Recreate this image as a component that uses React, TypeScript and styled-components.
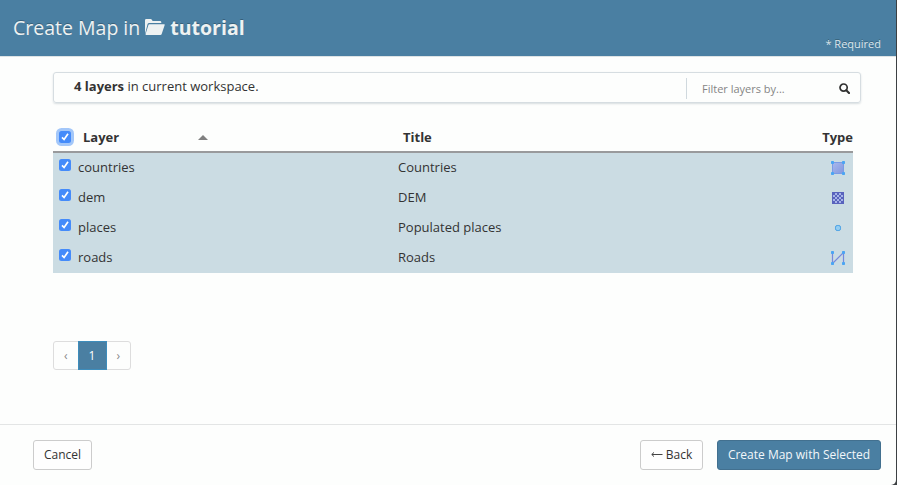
import React from 'react';
import styled, { createGlobalStyle, css } from 'styled-components';

const GlobalStyle = createGlobalStyle`
  * { box-sizing: border-box; }
  body {
    margin: 0;
    background: #3c4043;
    color: #333;
    font-family: 'Open Sans', 'Noto Sans', sans-serif;
    font-size: 13px;
    line-height: 20px;
    overflow: hidden;
  }
`;

const Dialog = styled.div`
  display: flex;
  flex-direction: column;
  width: 896px;
  height: 485px;
  background: #fdfefd;
  border-bottom-right-radius: 5px;
  overflow: hidden;
`;

const Header = styled.header`
  display: flex;
  justify-content: space-between;
  height: 57px;
  flex: none;
  padding: 0 15px 0 13px;
  background: #4a7fa2;
  border-bottom: 1px solid #dde3e5;
  color: #eef2f2;
  text-shadow: 0 -1px 0 rgba(0, 0, 0, 0.25);
`;

const Heading = styled.h1`
  display: flex;
  align-items: center;
  height: 56px;
  margin: 0;
  font-size: 19.5px;
  font-weight: 400;
  white-space: pre;

  strong { font-weight: 700; }
  svg { margin: 0 5px 2px 5px; }
`;

const Required = styled.span`
  align-self: flex-end;
  font-size: 11px;
  line-height: 15px;
  margin-bottom: 5px;
  color: #dce7ee;
`;

const Body = styled.main`
  flex: 1;
  padding: 15px 35px 0 53px;
`;

const FilterBar = styled.div`
  display: flex;
  height: 31px;
  border: 1px solid #d6dde1;
  border-radius: 3px;
  box-shadow: 0 1px 2px rgba(0, 40, 60, 0.15);
`;

const Count = styled.div`
  flex: 1;
  padding: 3px 0 0 20px;
`;

const Filter = styled.div`
  display: flex;
  align-items: center;
  justify-content: space-between;
  width: 174px;
  height: 21px;
  margin-top: 5px;
  padding: 0 10px 0 15px;
  border-left: 1px solid #d0d9de;
  color: #858585;
  font-size: 11px;
`;

const Table = styled.div`
  width: 800px;
  margin-top: 21px;
`;

const rowGrid = css`
  display: grid;
  grid-template-columns: 25px 320px 1fr 30px;
`;

const HeadRow = styled.div`
  ${rowGrid}
  grid-template-columns: 30px 115px 205px 1fr auto;
  height: 29px;
  padding-bottom: 2px;
  align-items: center;
  border-bottom: 2px solid #999a9c;
  font-weight: 700;
`;

const Row = styled.div`
  ${rowGrid}
  height: 30px;
  line-height: 28px;
  background: #cbdce3;
`;

const TypeCell = styled.span`
  display: flex;
  align-items: center;
  justify-content: center;
`;

const Check = styled.span<{ $focused?: boolean }>`
  display: flex;
  width: 12px;
  height: 12px;
  margin: ${p => (p.$focused ? '0 0 0 6px' : '6px 0 0 6px')};
  border-radius: 2.5px;
  background: #448bfa;
  box-shadow: ${p => (p.$focused ? '0 0 0 3px #a3c7f9' : 'none')};
`;

const SortArrow = styled.span`
  width: 0;
  height: 0;
  margin-top: 1px;
  border: 5px solid transparent;
  border-top: 0;
  border-bottom: 5px solid #808080;
`;

const Pager = styled.nav`
  display: flex;
  width: 78px;
  height: 29px;
  margin-top: 68px;
  border: 1px solid #ddd;
  border-radius: 3px;
`;

const PageItem = styled.span<{ $active?: boolean }>`
  display: flex;
  align-items: center;
  justify-content: center;
  flex: 1;
  color: #888;
  font-size: 12px;
  ${p => p.$active && css`
    flex: 0 0 29px;
    margin: -1px 0;
    border: 1px solid #3d8dbc;
    background: #4a7fa2;
    color: #fff;
  `}
`;

const Footer = styled.footer`
  display: flex;
  align-items: flex-start;
  flex: none;
  height: 61px;
  padding: 15px 15px 0 33px;
  border-top: 1px solid #e3e5e5;
`;

const Button = styled.button<{ $primary?: boolean; $width: number }>`
  display: flex;
  align-items: center;
  justify-content: center;
  gap: 3px;
  width: ${p => p.$width}px;
  height: 30px;
  padding: 0 0 1px;
  border: 1px solid ${p => (p.$primary ? '#42708f' : '#ccc')};
  border-radius: 3px;
  background: ${p => (p.$primary ? '#4a7fa2' : '#fefefe')};
  color: ${p => (p.$primary ? '#f2f7fa' : '#333')};
  font: 12px 'Open Sans', sans-serif;
  white-space: nowrap;
`;

const Actions = styled.div`
  display: flex;
  gap: 14px;
  margin-left: auto;
`;

const FolderIcon = () => (
  <svg width="20" height="17" viewBox="0 0 20 17" fill="#eef2f2">
    <path d="M0 15V1.2Q0 0 1.2 0H5.6Q6.5 0 7 1L7.6 2H15Q16.3 2 16.3 3.3V4H4.2Q3 4 2.6 5Z" />
    <path d="M4.3 5.3H19.2Q20 5.3 19.7 6.1L16.6 15.2Q16.3 16 15.4 16H1.2Q.3 16 .6 15.1L3.4 6Q3.6 5.3 4.3 5.3Z" />
  </svg>
);

const SearchIcon = () => (
  <svg width="11" height="11" viewBox="0 0 11 11" fill="none" stroke="#303030">
    <circle cx="4.6" cy="4.6" r="3.6" strokeWidth="1.7" />
    <path d="M7.3 7.3L10 10" strokeWidth="2.1" strokeLinecap="round" />
  </svg>
);

const BackArrow = () => (
  <svg width="12" height="7" viewBox="0 0 12 7" fill="none" stroke="#444">
    <path d="M.8 3.5H11.5M3 1.4L.8 3.5L3 5.6" />
  </svg>
);

const Checkbox = ({ focused }: { focused?: boolean }) => (
  <Check $focused={focused} role="checkbox" aria-checked="true">
    <svg width="12" height="12" viewBox="0 0 12 12" fill="none" stroke="#fff" strokeWidth="1.7">
      <path d="M3 6.3L5.1 8.5L9 2.8" />
    </svg>
  </Check>
);

type LayerType = 'polygon' | 'raster' | 'point' | 'line';

const Nodes = ({ points }: { points: number[][] }) => (
  <>
    {points.map(([x, y]) => (
      <rect key={`${x}-${y}`} x={x} y={y} width="3" height="3" rx=".7" fill="#4ba5f3" />
    ))}
  </>
);

const corners = [[1, 1], [12, 1], [1, 12], [12, 12]];

const checkerCells = Array.from({ length: 25 }, (_, i) => [i % 5, Math.floor(i / 5)])
  .filter(([x, y]) => (x + y) % 2 === 1);

const LayerIcon = ({ type }: { type: LayerType }) => (
  <svg width="16" height="16" viewBox="0 0 16 16">
    {type === 'polygon' && (
      <>
        <defs>
          <linearGradient id="area" x1="0" y1="0" x2="1" y2="1">
            <stop offset="0" stopColor="#a9b8ed" />
            <stop offset="1" stopColor="#8297de" />
          </linearGradient>
        </defs>
        <rect x="2.5" y="2.5" width="11" height="11" fill="url(#area)" stroke="#7b9be6" />
        <Nodes points={corners} />
      </>
    )}
    {type === 'raster' && (
      <>
        <rect x="2" y="2" width="12" height="12" fill="#5963bd" />
        {checkerCells.map(([x, y]) => (
          <rect key={`${x}-${y}`} x={3 + x * 2} y={3 + y * 2} width="2" height="2" fill="#a6b4e8" />
        ))}
      </>
    )}
    {type === 'point' && (
      <rect x="5.5" y="5.5" width="5" height="5" rx="1.7" fill="#94cdf2" stroke="#48a0e5" />
    )}
    {type === 'line' && (
      <>
        <path d="M2.5 2.5V13.5L13.5 2.5V13.5" fill="none" stroke="#7589dc" strokeWidth="1.2" />
        <Nodes points={corners} />
      </>
    )}
  </svg>
);

const layers: { name: string; title: string; type: LayerType }[] = [
  { name: 'countries', title: 'Countries', type: 'polygon' },
  { name: 'dem', title: 'DEM', type: 'raster' },
  { name: 'places', title: 'Populated places', type: 'point' },
  { name: 'roads', title: 'Roads', type: 'line' },
];

export default function App() {
  return (
    <>
      <GlobalStyle />
      <Dialog>
        <Header>
          <Heading>Create Map in<FolderIcon /><strong>tutorial</strong></Heading>
          <Required>* Required</Required>
        </Header>
        <Body>
          <FilterBar>
            <Count><strong>4 layers</strong> in current workspace.</Count>
            <Filter>Filter layers by...<SearchIcon /></Filter>
          </FilterBar>
          <Table>
            <HeadRow>
              <Checkbox focused />
              <span>Layer</span>
              <SortArrow />
              <span>Title</span>
              <span>Type</span>
            </HeadRow>
            {layers.map(layer => (
              <Row key={layer.name}>
                <Checkbox />
                <span>{layer.name}</span>
                <span>{layer.title}</span>
                <TypeCell><LayerIcon type={layer.type} /></TypeCell>
              </Row>
            ))}
          </Table>
          <Pager>
            <PageItem>‹</PageItem>
            <PageItem $active>1</PageItem>
            <PageItem>›</PageItem>
          </Pager>
        </Body>
        <Footer>
          <Button $width={59}>Cancel</Button>
          <Actions>
            <Button $width={63}><BackArrow />Back</Button>
            <Button $width={164} $primary>Create Map with Selected</Button>
          </Actions>
        </Footer>
      </Dialog>
    </>
  );
}
